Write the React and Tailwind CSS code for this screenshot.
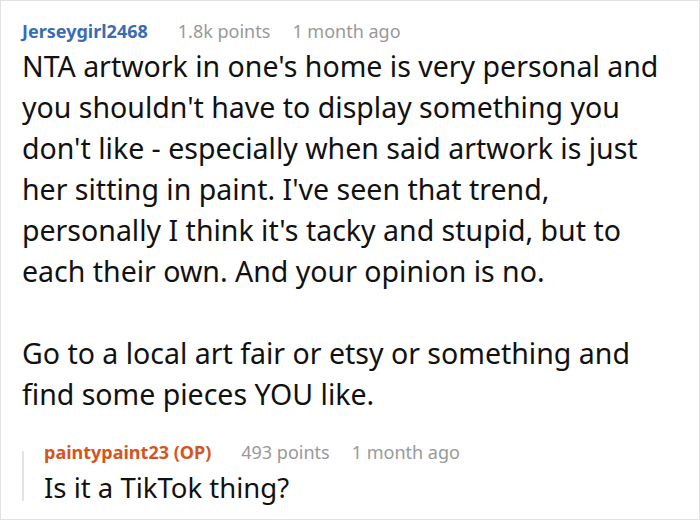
const body = [
  "NTA artwork in one's home is very personal and",
  "you shouldn't have to display something you",
  "don't like - especially when said artwork is just",
  "her sitting in paint. I've seen that trend,",
  "personally I think it's tacky and stupid, but to",
  "each their own. And your opinion is no.",
];

const body2 = ["Go to a local art fair or etsy or something and", "find some pieces YOU like."];

export default function App() {
  return (
    <div
      className="w-[700px] h-[520px] overflow-hidden border border-[#e2e2e2] bg-white pl-[21px] pr-[10px] pt-[16px]"
      style={{ fontFamily: '"Noto Sans", "Open Sans", sans-serif' }}
    >
      <div className="flex items-baseline text-[18px] leading-[28px]">
        <span className="font-bold text-[#3a6cb3]">Jerseygirl2468</span>
        <span className="ml-[30px] text-[#999]">1.8k points</span>
        <span className="ml-[22px] text-[#999]">1 month ago</span>
      </div>
      <div className="mt-[1px] text-[28.5px] leading-[41px] text-[#111] whitespace-nowrap">
        <p>
          {body.map((l, i) => (
            <span key={i} className="block">{l}</span>
          ))}
        </p>
        <p className="mt-[41px]">
          {body2.map((l, i) => (
            <span key={i} className="block">{l}</span>
          ))}
        </p>
      </div>
      <div className="mt-[23px] flex">
        <div className="mt-[13px] mb-[9px] w-[2px] bg-[#e4e4e4]" />
        <div className="pl-[20px]">
          <div className="flex items-baseline text-[18px] leading-[28px]">
            <span className="font-bold text-[#d4561f]">paintypaint23 (OP)</span>
            <span className="ml-[30px] text-[#999]">493 points</span>
            <span className="ml-[22px] text-[#999]">1 month ago</span>
          </div>
          <p className="text-[27.5px] leading-[44px] text-[#111]">Is it a TikTok thing?</p>
        </div>
      </div>
    </div>
  );
}
